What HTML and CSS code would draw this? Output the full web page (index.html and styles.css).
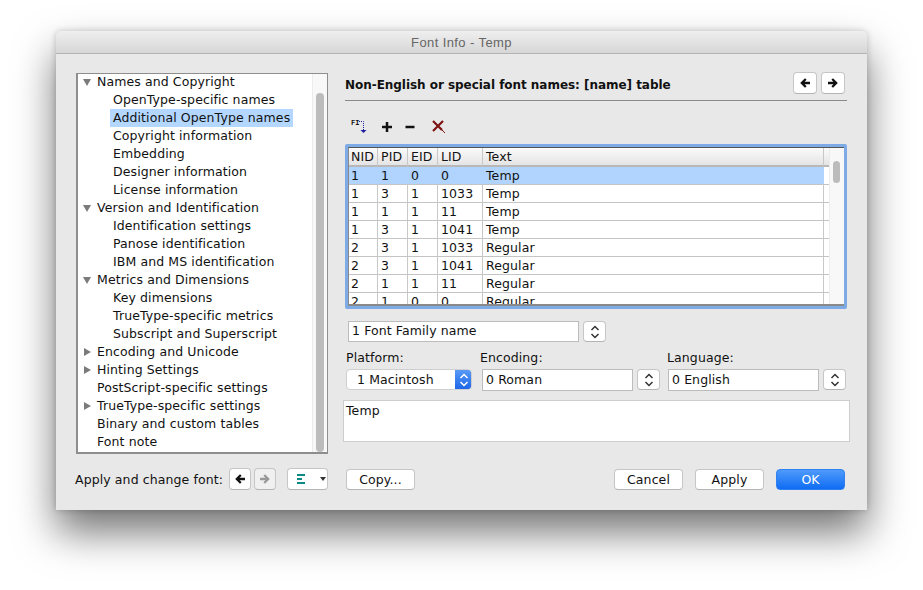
FILE: index.html
```html
<!DOCTYPE html>
<html>
<head>
<title>Font Info - Temp</title>
<link rel="stylesheet" href="styles.css">
</head>
<body>
<svg class="defs" width="0" height="0">
    <symbol id="arrow-left" viewBox="0 0 12 12"><path d="M6 1.2 L1.2 6 L6 10.8 L7.6 9.2 L5.6 7.2 H11 V4.8 H5.6 L7.6 2.8 Z"/></symbol>
    <symbol id="arrow-right" viewBox="0 0 12 12"><path d="M6 1.2 L10.8 6 L6 10.8 L4.4 9.2 L6.4 7.2 H1 V4.8 H6.4 L4.4 2.8 Z"/></symbol>
    <symbol id="updown" viewBox="0 0 10 16"><path d="M1.5 6 L5 2.5 L8.5 6 M1.5 10 L5 13.5 L8.5 10" fill="none" stroke="currentColor" stroke-width="1.5"/></symbol>
</svg>
<div class="window">
    <div class="titlebar">Font Info - Temp</div>
    <div class="content">
        <div class="tree">
            <ul class="tree-list">
                <li class="row"><i class="tw down"></i>Names and Copyright</li>
                <li class="row child"><span>OpenType-specific names</span></li>
                <li class="row child"><span class="sel">Additional OpenType names</span></li>
                <li class="row child"><span>Copyright information</span></li>
                <li class="row child"><span>Embedding</span></li>
                <li class="row child"><span>Designer information</span></li>
                <li class="row child"><span>License information</span></li>
                <li class="row"><i class="tw down"></i>Version and Identification</li>
                <li class="row child"><span>Identification settings</span></li>
                <li class="row child"><span>Panose identification</span></li>
                <li class="row child"><span>IBM and MS identification</span></li>
                <li class="row"><i class="tw down"></i>Metrics and Dimensions</li>
                <li class="row child"><span>Key dimensions</span></li>
                <li class="row child"><span>TrueType-specific metrics</span></li>
                <li class="row child"><span>Subscript and Superscript</span></li>
                <li class="row"><i class="tw right"></i>Encoding and Unicode</li>
                <li class="row"><i class="tw right"></i>Hinting Settings</li>
                <li class="row"><i class="tw"></i>PostScript-specific settings</li>
                <li class="row"><i class="tw right"></i>TrueType-specific settings</li>
                <li class="row"><i class="tw"></i>Binary and custom tables</li>
                <li class="row"><i class="tw"></i>Font note</li>
            </ul>
            <div class="scroll tree-scroll"><div class="thumb"></div></div>
        </div>
        <div class="panel">
            <div class="panel-head">
                <div class="panel-title">Non-English or special font names: [name] table</div>
                <button class="btn icon-btn"><svg width="12" height="12"><use href="#arrow-left"/></svg></button>
                <button class="btn icon-btn"><svg width="12" height="12"><use href="#arrow-right"/></svg></button>
            </div>
            <div class="tools">
                <svg class="tool-fi" width="18" height="16" viewBox="0 0 18 16">
                    <text x="1" y="6" class="fi-text">FI</text>
                    <path d="M9 2.5 H13.5 V11" fill="none" stroke="#1c1c9c" stroke-dasharray="1 1"/>
                    <path d="M10.5 11 H16.5 L13.5 14 Z" fill="#1c1c9c"/>
                </svg>
                <svg class="tool-plus" width="12" height="12" viewBox="0 0 12 12"><path d="M6 1 V11 M1 6 H11" stroke="#111" stroke-width="2.5"/></svg>
                <svg class="tool-minus" width="12" height="12" viewBox="0 0 12 12"><path d="M1.5 6 H10.5" stroke="#111" stroke-width="2.5"/></svg>
                <svg class="tool-x" width="14" height="14" viewBox="0 0 14 14"><path d="M1 1 L10 10 M11 1 L1 11" stroke="#7d1212" stroke-width="2.2"/><path d="M10 10 L13 13" stroke="#7d1212" stroke-width="1"/></svg>
            </div>
            <div class="names-frame">
                <div class="names-inner">
                    <table class="names">
                        <colgroup>
                            <col class="c-nid"><col class="c-pid"><col class="c-eid"><col class="c-lid"><col class="c-text"><col class="c-end">
                        </colgroup>
                        <thead>
                            <tr><th>NID</th><th>PID</th><th>EID</th><th>LID</th><th>Text</th><th></th></tr>
                        </thead>
                        <tbody>
                            <tr class="on"><td>1</td><td>1</td><td>0</td><td>0</td><td>Temp</td><td></td></tr>
                            <tr><td>1</td><td>3</td><td>1</td><td>1033</td><td>Temp</td><td></td></tr>
                            <tr><td>1</td><td>1</td><td>1</td><td>11</td><td>Temp</td><td></td></tr>
                            <tr><td>1</td><td>3</td><td>1</td><td>1041</td><td>Temp</td><td></td></tr>
                            <tr><td>2</td><td>3</td><td>1</td><td>1033</td><td>Regular</td><td></td></tr>
                            <tr><td>2</td><td>3</td><td>1</td><td>1041</td><td>Regular</td><td></td></tr>
                            <tr><td>2</td><td>1</td><td>1</td><td>11</td><td>Regular</td><td></td></tr>
                            <tr><td>2</td><td>1</td><td>0</td><td>0</td><td>Regular</td><td></td></tr>
                        </tbody>
                    </table>
                    <div class="scroll names-scroll"><div class="thumb"></div></div>
                </div>
            </div>
            <div class="name-row">
                <div class="field name-field">1 Font Family name</div>
                <button class="btn stepper"><svg width="10" height="16"><use href="#updown"/></svg></button>
            </div>
            <div class="selectors">
                <div class="sel-col platform">
                    <label>Platform:</label>
                    <div class="popup">
                        <span class="popup-text">1 Macintosh</span>
                        <span class="popup-arrows"><svg width="10" height="16"><use href="#updown"/></svg></span>
                    </div>
                </div>
                <div class="sel-col encoding">
                    <label>Encoding:</label>
                    <div class="combo">
                        <div class="field">0 Roman</div>
                        <button class="btn stepper"><svg width="10" height="16"><use href="#updown"/></svg></button>
                    </div>
                </div>
                <div class="sel-col language">
                    <label>Language:</label>
                    <div class="combo">
                        <div class="field">0 English</div>
                        <button class="btn stepper"><svg width="10" height="16"><use href="#updown"/></svg></button>
                    </div>
                </div>
            </div>
            <div class="text-box">Temp</div>
        </div>
    </div>
    <div class="footer">
        <div class="apply-label">Apply and change font:</div>
        <button class="btn icon-btn small"><svg width="12" height="12"><use href="#arrow-left"/></svg></button>
        <button class="btn icon-btn small off"><svg width="12" height="12"><use href="#arrow-right"/></svg></button>
        <button class="btn mark-btn">
            <svg width="10" height="10" viewBox="0 0 10 10"><path d="M0 1 H8 M0 5 H5 M0 9 H8" stroke="#0b8a86" stroke-width="2"/></svg>
            <i class="caret"></i>
        </button>
        <button class="btn text-btn copy">Copy...</button>
        <button class="btn text-btn cancel">Cancel</button>
        <button class="btn text-btn">Apply</button>
        <button class="btn text-btn ok">OK</button>
    </div>
</div>
</body>
</html>
```

FILE: styles.css
```css
* {
    margin: 0;
    padding: 0;
    box-sizing: border-box;
    list-style: none;
}

html, body {
    height: 100%;
    overflow: hidden;
}

body {
    background: #fff;
    font-family: "DejaVu Sans", sans-serif;
    font-size: 12.5px;
    letter-spacing: .1px;
    color: #111;
}

.defs {
    display: block;
    height: 0;
}

.window {
    margin: 31px 0 0 56px;
    width: 811px;
    height: 479px;
    background: #e8e8e8;
    border-radius: 5px 5px 0 0;
    box-shadow: 0 22px 40px rgba(0, 0, 0, .55), 0 0 6px rgba(0, 0, 0, .2);
}

.titlebar {
    height: 23px;
    line-height: 24px;
    text-align: center;
    font-family: "Liberation Sans", sans-serif;
    font-size: 13px;
    letter-spacing: .4px;
    color: #666;
    background: linear-gradient(#efefef, #d6d6d6);
    border-bottom: 1px solid #b4b4b4;
    border-radius: 5px 5px 0 0;
}

.content {
    display: flex;
    gap: 15px;
    padding: 19px 17px 0 20px;
    height: 400px;
}

/* left tree */
.tree {
    display: flex;
    width: 252px;
    height: 381px;
    background: #fff;
    border: 1px solid #8e8e8e;
    border-bottom-width: 2px;
    border-left-width: 2px;
    overflow: hidden;
}

.tree-list {
    flex: 1;
    margin-top: -1px;
}

.row {
    display: flex;
    align-items: center;
    height: 18px;
    line-height: 18px;
    white-space: nowrap;
}

.tw {
    width: 19px;
    height: 18px;
    position: relative;
    flex: none;
}

.tw.down:after {
    content: '';
    position: absolute;
    left: 5px;
    top: 6px;
    border-left: 4px solid transparent;
    border-right: 4px solid transparent;
    border-top: 7px solid #7b7b7b;
}

.tw.right:after {
    content: '';
    position: absolute;
    left: 6px;
    top: 5px;
    border-top: 4px solid transparent;
    border-bottom: 4px solid transparent;
    border-left: 7px solid #7b7b7b;
}

.child {
    padding-left: 32px;
}

.child span {
    padding: 0 3px;
}

.child .sel {
    background: #b3d7ff;
}

.scroll {
    flex: none;
    background: #f8f8f8;
    border-left: 1px solid #ececec;
}

.tree-scroll {
    width: 15px;
    padding: 19px 3px 1px 3px;
}

.thumb {
    background: #bcbcbc;
    border-radius: 4px;
}

.tree-scroll .thumb {
    height: 359px;
}

/* right panel */
.panel {
    width: 507px;
}

.panel-head {
    display: flex;
    align-items: center;
    gap: 4px;
    width: 502px;
    margin: -1px 0 0 2px;
    padding: 0 2px 6px 0;
    border-bottom: 1px solid #8a8a8a;
}

.panel-title {
    flex: 1;
    font-weight: bold;
    font-size: 12px;
    letter-spacing: -.04px;
    padding-top: 3px;
}

.btn {
    display: flex;
    align-items: center;
    justify-content: center;
    background: #fff;
    border: 1px solid #c6c6c6;
    border-bottom-color: #b4b4b4;
    border-radius: 4px;
    font-family: "DejaVu Sans", sans-serif;
    font-size: 12.5px;
    letter-spacing: .1px;
    color: #111;
}

.icon-btn {
    width: 24px;
    height: 22px;
}

.icon-btn svg {
    fill: #111;
}

.tools {
    display: flex;
    align-items: center;
    height: 43px;
    padding: 9px 0 0 7px;
}

.tool-plus {
    margin-left: 13px;
}

.tool-minus {
    margin-left: 11px;
}

.tool-x {
    margin-left: 16px;
}

.fi-text {
    font-family: "DejaVu Sans Mono", monospace;
    font-size: 7px;
    font-weight: bold;
    fill: #111;
}

.names-frame {
    width: 502px;
    height: 165px;
    margin-left: 2px;
    border: 3px solid #7eaae6;
    border-radius: 2px;
}

.names-inner {
    display: flex;
    align-items: flex-start;
    height: 159px;
    border: 1px solid #8a8a8a;
    border-top-color: #555;
    border-right-width: 0;
    border-bottom-width: 2px;
    overflow: hidden;
}

.names {
    width: 480px;
    flex: none;
    table-layout: fixed;
    border-collapse: separate;
    border-spacing: 0;
    background: #fff;
}

.c-nid { width: 29px; }
.c-pid { width: 30px; }
.c-eid { width: 30px; }
.c-lid { width: 45px; }
.c-text { width: 341px; }
.c-end { width: 5px; }

.names th,
.names td {
    height: 18px;
    padding: 1px 0 0 3px;
    line-height: 16px;
    text-align: left;
    font-weight: normal;
    white-space: nowrap;
    border-right: 1px solid #c8c8c8;
    border-bottom: 1px solid #c4c4c4;
}

.names th:first-child,
.names td:first-child {
    padding-left: 2px;
}

.names th {
    background: linear-gradient(#fbfbfb, #e4e4e4);
    border-bottom: 2px solid #b8b8b8;
}

.names th:last-child,
.names td:last-child {
    border-right: 0;
}

.names .on td:nth-child(-n+5) {
    background: #b0d4fd;
}

.names .on td {
    border-right-color: #b0d4fd;
}

.names-scroll {
    width: 15px;
    height: 156px;
    padding: 13px 4px 0 3px;
}

.names-scroll .thumb {
    height: 22px;
}

.name-row {
    display: flex;
    gap: 4px;
    margin: 12px 0 0 5px;
}

.field {
    height: 21px;
    line-height: 19px;
    padding-left: 3px;
    background: #fff;
    border: 1px solid #bcbcbc;
    white-space: nowrap;
}

.name-field {
    width: 231px;
    line-height: 17px;
}

.stepper {
    width: 23px;
    height: 21px;
    flex: none;
}

.stepper svg {
    color: #333;
}

.selectors {
    display: flex;
    margin: 7px 0 0 3px;
}

.sel-col label {
    display: block;
    height: 20px;
    line-height: 17px;
}

.platform {
    width: 134px;
}

.encoding {
    width: 187px;
}

.combo {
    display: flex;
    gap: 4px;
}

.combo .field {
    flex: 1;
    height: 22px;
}

.encoding .combo {
    width: 178px;
    margin-left: 2px;
}

.language .combo {
    width: 178px;
    margin-left: 1px;
}

.popup {
    display: flex;
    width: 126px;
    height: 21px;
    background: #fff;
    border: 1px solid #cfcfcf;
    border-radius: 4px;
    overflow: hidden;
}

.popup-text {
    flex: 1;
    padding-left: 10px;
    line-height: 19px;
}

.popup-arrows {
    display: flex;
    align-items: center;
    justify-content: center;
    width: 17px;
    margin: -1px -1px -1px 0;
    color: #fff;
    background: linear-gradient(#5a9df8, #1a64e8);
}

.text-box {
    width: 507px;
    height: 42px;
    margin-top: 9px;
    padding: 0 2px;
    line-height: 19px;
    background: #fff;
    border: 1px solid #cdcdcd;
}

/* footer */
.footer {
    display: flex;
    align-items: center;
    height: 22px;
    margin-top: 14px;
    padding: 0 22px 0 19px;
}

.apply-label {
    width: 154px;
    white-space: nowrap;
}

.small {
    width: 22px;
}

.small + .small {
    margin-left: 3px;
}

.off {
    background: #f0f0f0;
}

.off svg {
    fill: #999;
}

.mark-btn {
    width: 41px;
    height: 22px;
    margin-left: 11px;
    justify-content: flex-start;
    padding-left: 9px;
    gap: 13px;
}

.caret {
    border-left: 3.5px solid transparent;
    border-right: 3.5px solid transparent;
    border-top: 4px solid #333;
}

.text-btn {
    width: 69px;
    height: 21px;
    margin-left: 12px;
}

.copy {
    margin-left: 18px;
}

.cancel {
    margin-left: auto;
}

.ok {
    color: #fff;
    background: linear-gradient(#4f9bfb, #0f6cf3);
    border-color: #2f80f0;
}
```
